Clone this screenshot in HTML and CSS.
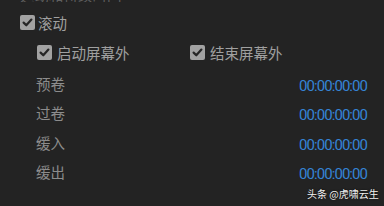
FILE: index.html
```html
<!DOCTYPE html>
<html>
<head>
<meta charset="utf-8">
<link rel="stylesheet" href="styles.css">
</head>
<body>
<div class="panel">
  <div class="head"><span class="head-text">运动和持续时间</span></div>
  <label class="check main">
    <span class="box"><svg viewBox="0 0 15 15" width="15" height="15"><path d="M3.6 7.6 L6.3 10.3 L11.4 4.6" fill="none" stroke="#262626" stroke-width="2.2" stroke-linecap="round" stroke-linejoin="round"/></svg></span>
    <span class="text">滚动</span>
  </label>
  <div class="sub">
    <label class="check first">
      <span class="box"><svg viewBox="0 0 15 15" width="15" height="15"><path d="M3.6 7.6 L6.3 10.3 L11.4 4.6" fill="none" stroke="#262626" stroke-width="2.2" stroke-linecap="round" stroke-linejoin="round"/></svg></span>
      <span class="text">启动屏幕外</span>
    </label>
    <label class="check">
      <span class="box"><svg viewBox="0 0 15 15" width="15" height="15"><path d="M3.6 7.6 L6.3 10.3 L11.4 4.6" fill="none" stroke="#262626" stroke-width="2.2" stroke-linecap="round" stroke-linejoin="round"/></svg></span>
      <span class="text">结束屏幕外</span>
    </label>
  </div>
  <div class="grid">
    <div class="lbl">预卷</div><div class="tc">00:00:00:00</div>
    <div class="lbl">过卷</div><div class="tc">00:00:00:00</div>
    <div class="lbl">缓入</div><div class="tc">00:00:00:00</div>
    <div class="lbl">缓出</div><div class="tc">00:00:00:00</div>
  </div>
</div>
<div class="mark">头条 @虎啸云生</div>
</body>
</html>
```
FILE: styles.css
```css
html, body {
  margin: 0;
  padding: 0;
  background: #232323;
  width: 384px;
  height: 206px;
  overflow: hidden;
}
body {
  position: relative;
  font-family: "Noto Sans CJK SC", "Noto Sans", sans-serif;
}
.panel {
  display: flex;
  flex-direction: column;
}
.head {
  height: 2px;
  overflow: hidden;
  padding-left: 20px;
}
.head-text {
  display: block;
  margin-top: -12px;
  font-size: 14.5px;
  line-height: 14px;
  color: #5f5f5f;
  white-space: nowrap;
}
.check {
  display: flex;
  align-items: center;
  gap: 3px;
  height: 15px;
}
.main {
  margin-top: 13px;
  padding-left: 20px;
}
.box {
  width: 15px;
  height: 15px;
  border-radius: 2px;
  background: #a2a2a2;
  display: block;
}
.box svg { display: block; }
.text {
  font-size: 14.5px;
  line-height: 15px;
  color: #a0a0a0;
  white-space: nowrap;
}
.sub {
  display: flex;
  padding-left: 37px;
  margin-top: 15px;
}
.sub .check { gap: 5px; }
.sub .first { width: 153px; }
.grid {
  display: grid;
  grid-template-columns: 1fr auto;
  grid-auto-rows: 29.5px;
  margin-top: 9px;
  padding-left: 36px;
  padding-right: 17px;
  align-items: center;
}
.lbl {
  font-size: 14.5px;
  line-height: 16px;
  color: #8c8c8c;
}
.tc {
  font-family: Roboto, "Liberation Sans", sans-serif;
  font-size: 15px;
  letter-spacing: -0.95px;
  line-height: 16px;
  color: #3584d6;
  margin-top: 4px;
}
.mark {
  position: absolute;
  left: 307px;
  top: 187px;
  font-size: 10px;
  line-height: 14px;
  color: #f2f2f2;
  text-shadow: 0 0 2px rgba(0,0,0,0.8);
  white-space: nowrap;
}
```
